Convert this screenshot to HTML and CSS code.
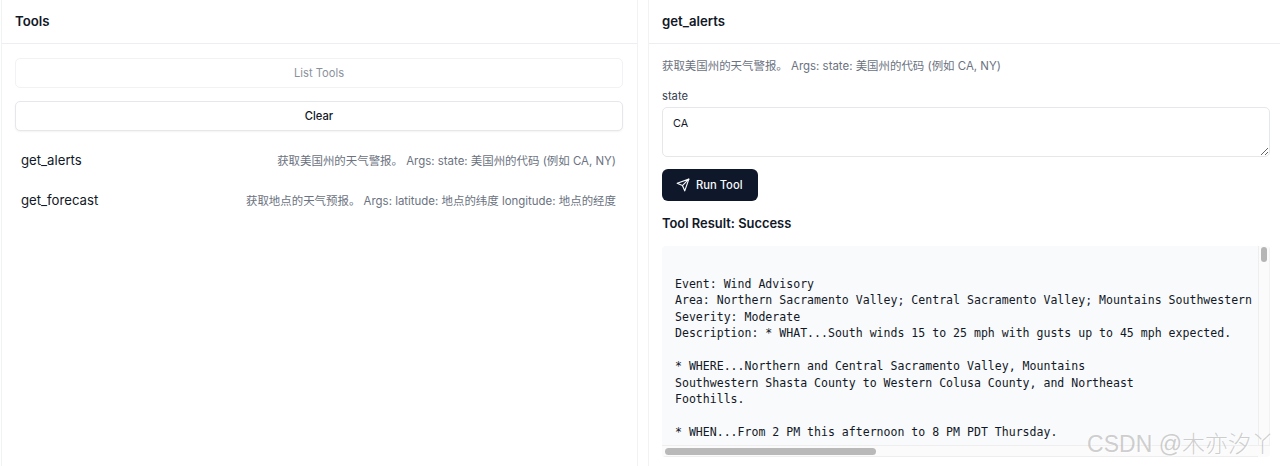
FILE: index.html
```html
<!DOCTYPE html>
<html lang="en">
<head>
<meta charset="utf-8">
<title>Tools</title>
<link rel="stylesheet" href="styles.css">
</head>
<body>
<div class="layout">
  <section class="panel">
    <header class="panel-head"><h3>Tools</h3></header>
    <div class="panel-body">
      <button class="btn btn-disabled">List Tools</button>
      <button class="btn btn-clear">Clear</button>
      <ul class="tool-list">
        <li class="tool"><span class="tool-name">get_alerts</span><span class="tool-desc">获取美国州的天气警报。 Args: state: 美国州的代码 (例如 CA, NY)</span></li>
        <li class="tool"><span class="tool-name">get_forecast</span><span class="tool-desc">获取地点的天气预报。 Args: latitude: 地点的纬度 longitude: 地点的经度</span></li>
      </ul>
    </div>
  </section>
  <section class="panel">
    <header class="panel-head"><h3>get_alerts</h3></header>
    <div class="detail-body">
      <p class="detail-desc">获取美国州的天气警报。 Args: state: 美国州的代码 (例如 CA, NY)</p>
      <label class="field-label" for="state">state</label>
      <textarea class="field" id="state">CA</textarea>
      <button class="run">
        <svg class="run-icon" viewBox="0 0 24 24" fill="none" stroke="currentColor" stroke-width="2" stroke-linecap="round" stroke-linejoin="round"><path d="m22 2-7 20-4-9-9-4Z"/><path d="M22 2 11 13"/></svg>
        Run Tool
      </button>
      <h4 class="result-title">Tool Result: Success</h4>
      <div class="result">
        <pre class="result-text">

Event: Wind Advisory
Area: Northern Sacramento Valley; Central Sacramento Valley; Mountains Southwestern
Severity: Moderate
Description: * WHAT...South winds 15 to 25 mph with gusts up to 45 mph expected.

* WHERE...Northern and Central Sacramento Valley, Mountains
Southwestern Shasta County to Western Colusa County, and Northeast
Foothills.

* WHEN...From 2 PM this afternoon to 8 PM PDT Thursday.</pre>
        <div class="vbar"><div class="vthumb"></div></div>
        <div class="hbar"><div class="hthumb"></div></div>
        <div class="corner"></div>
      </div>
    </div>
  </section>
</div>
<div class="watermark">CSDN @木亦汐丫</div>
</body>
</html>
```
FILE: styles.css
```css
* { box-sizing: border-box; }
html, body { height: 100%; }
body {
  margin: 0;
  overflow: hidden;
  background: #fff;
  color: #111827;
  font-family: Inter, "Noto Sans CJK SC", sans-serif;
  font-size: 12.25px;
}
.layout {
  display: grid;
  grid-template-columns: 637px 632px;
  column-gap: 10px;
  padding-left: 1px;
  height: 466px;
}
.panel {
  display: flex;
  flex-direction: column;
  min-width: 0;
  border-left: 1px solid #f1f2f4;
  border-right: 1px solid #f1f2f4;
}
.panel:last-child { border-right: 0; }
.panel-head {
  height: 44px;
  flex: none;
  display: flex;
  align-items: center;
  padding: 0 13px 1px;
  border-bottom: 1px solid #eceef1;
}
.panel-head h3 { margin: 0; font-size: 13.2px; font-weight: 600; }
.panel-body { padding: 14px 14px 0 13px; }
.btn {
  display: block;
  width: 100%;
  height: 30px;
  background: #fff;
  border: 1px solid #e5e7eb;
  border-radius: 5px;
  font: 500 11.2px Inter, sans-serif;
  color: #111827;
  padding: 0;
}
.btn-disabled { color: #8b919c; border-color: #f1f2f4; font-weight: 400; }
.btn-clear { margin-top: 13px; box-shadow: 0 1px 2px rgba(0,0,0,.05); }
.tool-list { list-style: none; margin: 10px 0 0; padding: 0; }
.tool {
  display: flex;
  justify-content: space-between;
  align-items: center;
  height: 40px;
  padding: 0 7px 2px 6px;
}
.tool-name { font-size: 13.2px; }
.tool-desc { font-size: 11.45px; color: #6b7280; }
.detail-body { flex: 1; min-height: 0; padding: 14px 10px 0 13px; display: flex; flex-direction: column; align-items: flex-start; }
.detail-desc { margin: 0; font-size: 11.45px; line-height: 16px; color: #6b7280; }
.field-label { margin-top: 14px; font-size: 11.2px; line-height: 16px; color: #374151; }
.field {
  display: block;
  width: 100%;
  height: 50px;
  margin-top: 3px;
  padding: 8px 10px;
  border: 1px solid #e5e7eb;
  border-radius: 5px;
  font: 10.8px/16px Inter, sans-serif;
  color: #111827;
  flex: none;
  outline: 0;
}
.run {
  display: inline-flex;
  align-items: center;
  gap: 6px;
  height: 32px;
  margin-top: 12px;
  padding: 0 16px 0 14px;
  flex: none;
  background: #0f172a;
  color: #f8fafc;
  border: 0;
  border-radius: 6px;
  font: 500 11.2px Inter, sans-serif;
}
.run-icon { width: 14px; height: 14px; }
.result-title { margin: 14px 0 0; font-size: 12.9px; line-height: 17px; font-weight: 600; }
.result {
  display: grid;
  grid-template-columns: minmax(0, 1fr) 12px;
  grid-template-rows: minmax(0, 1fr) 12px;
  width: 100%;
  height: 211px;
  margin-top: 14px;
  flex: none;
  background: #f9fafb;
  border-radius: 4px;
  overflow: hidden;
}
.result-text {
  margin: 0;
  padding: 13.4px 0 0 13px;
  font: 11.55px/16.5px "DejaVu Sans Mono", monospace;
  color: #111827;
  overflow: hidden;
}
.vbar { background: #fbfbfb; border-left: 1px solid #eeeeee; border-right: 1px solid #f2f2f2; padding: 1px 2px 0; }
.vthumb { height: 15px; background: #b5b5b5; border-radius: 4px; }
.hbar { background: #fbfbfb; border-top: 1px solid #eeeeee; border-bottom: 1px solid #eeeeee; padding: 2px 0 2px 3px; }
.hthumb { width: 211px; height: 7px; background: #b9b9b9; border-radius: 4px; }
.corner { background: #fbfbfb; border-top: 1px solid #eeeeee; }
.watermark {
  position: absolute;
  right: 6px;
  top: 429px;
  font: 23px/30px "Liberation Sans", "Noto Sans CJK SC", sans-serif;
  font-weight: 300;
  color: rgba(140,140,140,.42);
  text-shadow: 1px 1px 0 rgba(255,255,255,.7);
}
```
